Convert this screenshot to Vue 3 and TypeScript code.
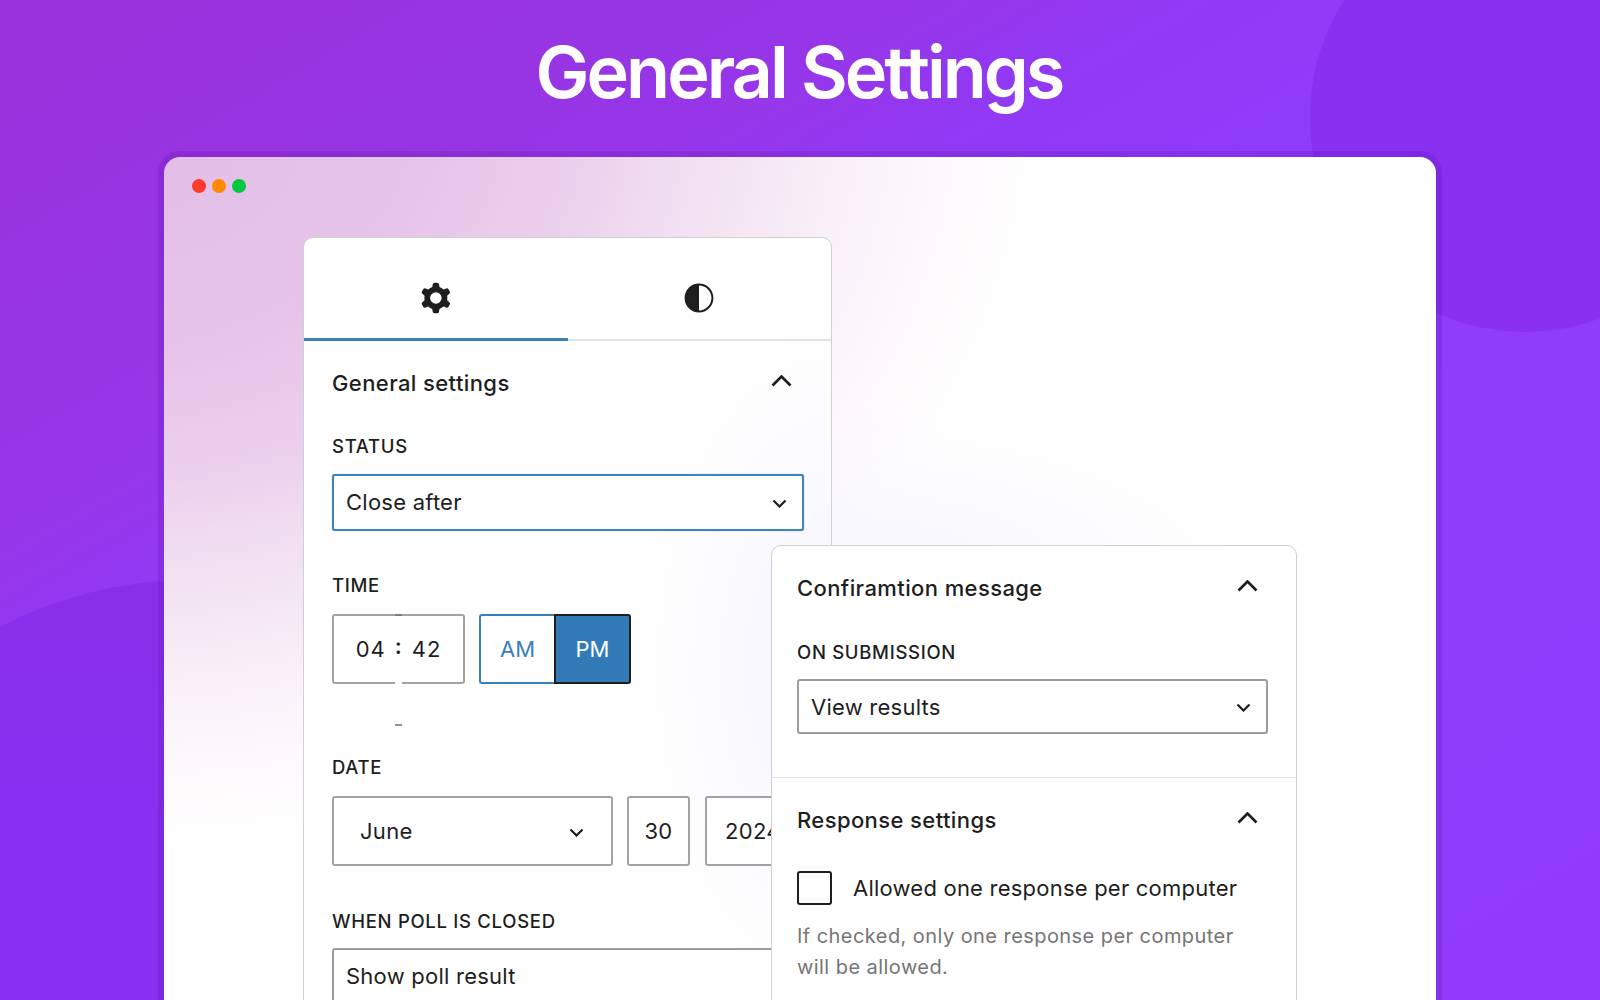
<script setup lang="ts">
const dots: string[] = ['#ff3b30', '#ff8a00', '#00c83f']
const gear =
  'M10.289 4.836A1 1 0 0111.275 4h1.306a1 1 0 01.987.836l.244 1.466c.787.26 1.503.679 2.108 1.218l1.393-.522a1 1 0 011.216.437l.653 1.13a1 1 0 01-.23 1.273l-1.148.944a6.025 6.025 0 010 2.435l1.149.946a1 1 0 01.23 1.272l-.653 1.13a1 1 0 01-1.216.437l-1.394-.522c-.605.54-1.32.958-2.108 1.218l-.244 1.466a1 1 0 01-.987.836h-1.306a1 1 0 01-.986-.836l-.244-1.466a5.995 5.995 0 01-2.108-1.218l-1.394.522a1 1 0 01-1.217-.436l-.653-1.131a1 1 0 01.23-1.272l1.149-.946a6.026 6.026 0 010-2.435l-1.148-.944a1 1 0 01-.23-1.272l.653-1.131a1 1 0 011.217-.437l1.393.522a5.994 5.994 0 012.108-1.218l.244-1.466zM14.929 12a3 3 0 11-6 0 3 3 0 016 0z'
</script>

<template>
  <div class="page">
    <div class="blob blob-top"></div>
    <div class="blob blob-left"></div>
    <h1 class="headline">General Settings</h1>
    <div class="window">
      <div class="dots">
        <span v-for="c in dots" :key="c" class="dot" :style="{ background: c }"></span>
      </div>
      <div class="panel panel-a">
        <div class="tabs">
          <div class="tab active">
            <svg width="46" height="46" viewBox="0 0 24 24"><path fill="#1e1e1e" fill-rule="evenodd" clip-rule="evenodd" :d="gear" /></svg>
          </div>
          <div class="tab">
            <svg width="30" height="30" viewBox="0 0 30 30"><circle cx="15" cy="15" r="13.4" fill="none" stroke="#1e1e1e" stroke-width="2" /><path d="M15 1.6a13.4 13.4 0 0 0 0 26.8z" fill="#1e1e1e" /></svg>
          </div>
        </div>
        <div class="body">
          <div class="title-row">
            <span class="title">General settings</span>
            <svg class="chev-up" width="21" height="12" viewBox="0 0 21 12"><path d="M1.5 10.5l9-9 9 9" fill="none" stroke="#1e1e1e" stroke-width="2.7" /></svg>
          </div>
          <div class="label first-label">STATUS</div>
          <div class="select focused">
            <span>Close after</span>
            <svg class="chev-sm" width="15" height="9" viewBox="0 0 15 9"><path d="M1.5 1.5l6 6 6-6" fill="none" stroke="#1e1e1e" stroke-width="2.2" /></svg>
          </div>
          <div class="label time-label">TIME</div>
          <div class="row time-row">
            <div class="time-box">
              <span>04</span><span class="colon">:</span><span>42</span>
              <i class="notch notch-top"></i>
              <i class="notch notch-gap"></i>
              <i class="notch notch-dash"></i>
            </div>
            <div class="ampm">
              <div class="am">AM</div>
              <div class="pm">PM</div>
            </div>
          </div>
          <div class="label date-label">DATE</div>
          <div class="row date-row">
            <div class="month">
              <span>June</span>
              <svg width="15" height="9" viewBox="0 0 15 9"><path d="M1.5 1.5l6 6 6-6" fill="none" stroke="#1e1e1e" stroke-width="2.2" /></svg>
            </div>
            <div class="day">30</div>
            <div class="year">2024</div>
          </div>
          <div class="label when-label">WHEN POLL IS CLOSED</div>
          <div class="select plain when-select">
            <span>Show poll result</span>
          </div>
        </div>
      </div>

      <div class="panel panel-b">
        <div class="section top-section">
          <div class="title-row">
            <span class="title">Confiramtion message</span>
            <svg class="chev-up" width="21" height="12" viewBox="0 0 21 12"><path d="M1.5 10.5l9-9 9 9" fill="none" stroke="#1e1e1e" stroke-width="2.7" /></svg>
          </div>
          <div class="label submission-label">ON SUBMISSION</div>
          <div class="select plain compact">
            <span>View results</span>
            <svg class="chev-sm" width="15" height="9" viewBox="0 0 15 9"><path d="M1.5 1.5l6 6 6-6" fill="none" stroke="#1e1e1e" stroke-width="2.2" /></svg>
          </div>
        </div>
        <div class="section">
          <div class="title-row">
            <span class="title">Response settings</span>
            <svg class="chev-up" width="21" height="12" viewBox="0 0 21 12"><path d="M1.5 10.5l9-9 9 9" fill="none" stroke="#1e1e1e" stroke-width="2.7" /></svg>
          </div>
          <div class="check-row">
            <span class="checkbox"></span>
            <span class="check-text">Allowed one response per computer</span>
          </div>
          <p class="help">If checked, only one response per computer<br />will be allowed.</p>
        </div>
      </div>
    </div>
  </div>
</template>

<style>
html,
body {
  margin: 0;
  background: #8f3cfb;
}
</style>

<style scoped>
.page {
  position: relative;
  width: 1600px;
  height: 1000px;
  overflow: hidden;
  background: linear-gradient(150deg, #9b33dc 0%, #9833e0 12%, #9735e4 21%, #9636e8 27%, #9139f4 36%, #8f3cfb 46%, #903bfb 100%);
  font-family: Inter, "Liberation Sans", sans-serif;
  color: #1e1e1e;
}
.blob {
  position: absolute;
  border-radius: 50%;
}
.blob-top {
  left: 1310px;
  top: -98px;
  width: 430px;
  height: 430px;
  background: #8a30f1;
}
.blob-left {
  left: -215px;
  top: 580px;
  width: 810px;
  height: 810px;
  background: linear-gradient(180deg, #8a2fe8 0%, #8831f3 30%);
}
.headline {
  position: relative;
  margin: 0;
  height: 151px;
  box-sizing: border-box;
  padding: 27px 2px 0 0;
  text-align: center;
  font-size: 72px;
  line-height: 90px;
  font-weight: 600;
  letter-spacing: -3px;
  color: #fff;
}
.window {
  position: relative;
  box-sizing: border-box;
  width: 1272px;
  height: 900px;
  margin: 6px 0 0 164px;
  padding-top: 80px;
  border-radius: 16px;
  box-shadow: 0 0 0 6px rgba(60, 0, 130, 0.14);
  background:
    radial-gradient(ellipse 420px 170px at 690px 420px, #f7f6fc 0%, rgba(255, 255, 255, 0) 100%),
    radial-gradient(ellipse 950px 750px at -64px -57px, #e2bde8 0%, #e6c4e9 35%, #ebcfec 50%, #f0dcf1 60%, #f6e9f5 72%, #fcf6fb 85%, #fff 100%);
}
.dots {
  position: absolute;
  left: 28px;
  top: 22px;
  display: flex;
  gap: 6px;
}
.dot {
  width: 14px;
  height: 14px;
  border-radius: 50%;
}
.panel {
  box-sizing: border-box;
  border: 1px solid #cfcfd6;
  border-radius: 10px;
  background: #fff;
}
.panel-a {
  width: 529px;
  height: 820px;
  margin-left: 139px;
  background:
    radial-gradient(ellipse 200px 360px at 100% 430px, #f6f4fb 0%, rgba(255, 255, 255, 0) 100%),
    #fff;
}
.tabs {
  display: flex;
  height: 101px;
  border-bottom: 2px solid #e2e2e2;
}
.tab {
  flex: 1;
  display: flex;
  align-items: center;
  justify-content: center;
  margin-bottom: -2px;
  padding-top: 20px;
  border-bottom: 3px solid transparent;
  box-sizing: border-box;
}
.tab.active {
  border-bottom-color: #3a80ba;
}
.body {
  padding: 27px 27px 0 28px;
}
.title-row {
  display: flex;
  align-items: center;
  justify-content: space-between;
  height: 30px;
  padding-right: 12px;
}
.title {
  font-size: 22px;
  line-height: 30px;
  font-weight: 500;
  letter-spacing: 0.4px;
}
.chev-up {
  margin-top: -5px;
}
.label {
  height: 22px;
  font-size: 18.5px;
  line-height: 22px;
  font-weight: 500;
  letter-spacing: 0.7px;
}
.first-label {
  margin-top: 37px;
}
.time-label {
  margin-top: 43px;
}
.date-label {
  margin-top: 72px;
}
.when-label {
  margin-top: 44px;
}
.submission-label {
  margin-top: 38px;
}
.select {
  box-sizing: border-box;
  display: flex;
  align-items: center;
  justify-content: space-between;
  height: 56px;
  margin-top: 17px;
  padding: 0 15px 0 12px;
  border-radius: 3px;
  font-size: 22px;
  letter-spacing: 0.24px;
  background: #fff;
}
.focused {
  height: 57px;
  padding-bottom: 1px;
  border: 2px solid #3f84bb;
  box-shadow: 0 0 1px #3f84bb;
}
.plain {
  border: 2px solid #9c9c9c;
}
.when-select {
  margin-top: 16px;
}
.compact {
  height: 55px;
  width: 471px;
  margin-top: 16px;
}
.chev-sm {
  margin-top: 2px;
}
.row {
  display: flex;
  margin-top: 18px;
  height: 70px;
}
.time-box {
  position: relative;
  box-sizing: border-box;
  display: flex;
  align-items: center;
  justify-content: center;
  gap: 9px;
  width: 133px;
  border: 2px solid #a3a3a3;
  border-radius: 3px;
  font-size: 22px;
  letter-spacing: 1px;
  background: #fff;
}
.colon {
  margin-top: -6px;
  font-weight: 600;
}
.notch {
  position: absolute;
  left: 61px;
  width: 7px;
}
.notch-top {
  top: -2px;
  height: 2px;
  background: #7d7d7d;
}
.notch-gap {
  top: 65px;
  height: 8px;
  background: #fff;
}
.notch-dash {
  top: 108px;
  height: 2px;
  background: #949494;
}
.ampm {
  display: flex;
  margin-left: 14px;
  width: 152px;
  font-size: 22px;
}
.am,
.pm {
  box-sizing: border-box;
  flex: 1;
  display: flex;
  align-items: center;
  justify-content: center;
}
.am {
  border: 2px solid #3a80ba;
  border-right: 0;
  border-radius: 3px 0 0 3px;
  color: #3a80ba;
  background: #fff;
}
.pm {
  border: 2px solid #1e1e1e;
  border-radius: 0 3px 3px 0;
  background: #337bb6;
  color: #fff;
}
.month,
.day,
.year {
  box-sizing: border-box;
  display: flex;
  align-items: center;
  border: 2px solid #a3a3a3;
  border-radius: 3px;
  font-size: 22px;
  letter-spacing: 0.3px;
  background: #fff;
  flex: none;
}
.month {
  width: 281px;
  padding: 0 27px 0 26px;
  justify-content: space-between;
}
.month svg {
  margin-top: 2px;
}
.day {
  width: 63px;
  margin-left: 14px;
  justify-content: center;
}
.year {
  width: 100px;
  margin-left: 15px;
  padding-left: 18px;
  overflow: hidden;
}
.panel-b {
  position: absolute;
  left: 607px;
  top: 388px;
  width: 526px;
  height: 520px;
}
.section {
  padding: 27px 25px 0;
}
.section .title-row {
  padding-right: 13px;
}
.top-section {
  padding-bottom: 43px;
  border-bottom: 1px solid #e2e2e2;
}
.check-row {
  display: flex;
  align-items: center;
  margin-top: 36px;
  height: 34px;
}
.checkbox {
  box-sizing: border-box;
  width: 35px;
  height: 34px;
  border: 2px solid #1e1e1e;
  border-radius: 3px;
}
.check-text {
  margin-left: 21px;
  font-size: 22px;
  letter-spacing: 0.22px;
}
.help {
  margin: 16px 0 0;
  font-size: 20px;
  line-height: 31px;
  letter-spacing: 0.44px;
  color: #757575;
}
</style>
